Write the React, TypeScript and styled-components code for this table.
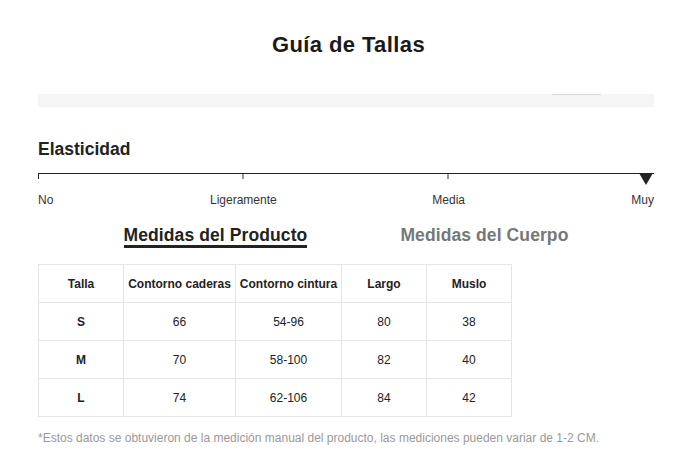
import React from "react";
import styled, { createGlobalStyle } from "styled-components";

const Global = createGlobalStyle`
  html, body { margin: 0; padding: 0; background: #fff; }
  body { font-family: "Liberation Sans", Arial, sans-serif; color: #222; }
`;

const Page = styled.div`
  width: 616px;
  padding: 33px 34px 0 38px;
  display: flex;
  flex-direction: column;
`;

const Title = styled.h1`
  margin: 0;
  font-size: 22px;
  line-height: 24px;
  font-weight: 700;
  letter-spacing: 0.4px;
  text-align: center;
  color: #1a1a1a;
  padding-left: 5px;
`;

const GreyBar = styled.div`
  margin-top: 37px;
  height: 13px;
  background: #f5f5f5;
  position: relative;
`;

const BarThumb = styled.div`
  position: absolute;
  top: 0;
  left: 514px;
  width: 49px;
  height: 1px;
  background: #dcdcdc;
`;

const SectionTitle = styled.h2`
  margin: 32px 0 0;
  font-size: 17.5px;
  line-height: 20px;
  font-weight: 700;
  color: #222;
`;

const Scale = styled.div`
  margin-top: 14px;
  position: relative;
  height: 12px;
  border-top: 1px solid #222;
  display: flex;
  justify-content: space-between;
`;

const Tick = styled.span<{ $dark?: boolean; $hide?: boolean }>`
  width: ${(p) => (p.$dark ? 1 : 2)}px;
  height: 5px;
  background: ${(p) => (p.$dark ? "#222" : "#999")};
  visibility: ${(p) => (p.$hide ? "hidden" : "visible")};
`;

const Marker = styled.span`
  position: absolute;
  top: -1px;
  right: 1px;
  width: 0;
  height: 0;
  border-left: 7px solid transparent;
  border-right: 7px solid transparent;
  border-top: 12px solid #222;
`;

const LabelRow = styled.div`
  margin-top: 7px;
  display: flex;
  justify-content: space-between;
`;

const Label = styled.span<{ $align: "start" | "center" | "end" }>`
  width: 0;
  display: flex;
  white-space: nowrap;
  justify-content: ${(p) =>
    p.$align === "start" ? "flex-start" : p.$align === "end" ? "flex-end" : "center"};
  font-size: 12px;
  line-height: 14px;
  color: #333;
`;

const Tabs = styled.div`
  margin-top: 18px;
  display: flex;
  justify-content: center;
  gap: 93px;
`;

const Tab = styled.div<{ $active?: boolean }>`
  font-size: 17.5px;
  line-height: 20px;
  font-weight: 700;
  letter-spacing: 0.1px;
  color: ${(p) => (p.$active ? "#222" : "#777")};
  border-bottom: 3px solid ${(p) => (p.$active ? "#222" : "transparent")};
`;

const Table = styled.table`
  margin-top: 16px;
  border-collapse: collapse;
  table-layout: fixed;
  width: 473px;
`;

const Cell = styled.td<{ $head?: boolean }>`
  border: 1px solid #e5e5e5;
  height: 37px;
  padding: 0;
  text-align: center;
  vertical-align: middle;
  font-size: 12px;
  line-height: 14px;
  white-space: nowrap;
  color: #222;
  font-weight: ${(p) => (p.$head ? 700 : 400)};
`;

const Note = styled.p`
  margin: 14px 0 0;
  font-size: 12px;
  line-height: 14px;
  color: #999;
`;

const widths = [85, 112, 106, 85, 85];
const headers = ["Talla", "Contorno caderas", "Contorno cintura", "Largo", "Muslo"];
const rows = [
  ["S", "66", "54-96", "80", "38"],
  ["M", "70", "58-100", "82", "40"],
  ["L", "74", "62-106", "84", "42"],
];

export default function App() {
  return (
    <>
      <Global />
      <Page>
        <Title>Guía de Tallas</Title>
        <GreyBar>
          <BarThumb />
        </GreyBar>
        <SectionTitle>Elasticidad</SectionTitle>
        <Scale>
          <Tick $dark />
          <Tick />
          <Tick />
          <Tick $hide />
          <Marker />
        </Scale>
        <LabelRow>
          <Label $align="start">No</Label>
          <Label $align="center">Ligeramente</Label>
          <Label $align="center">Media</Label>
          <Label $align="end">Muy</Label>
        </LabelRow>
        <Tabs>
          <Tab $active>Medidas del Producto</Tab>
          <Tab>Medidas del Cuerpo</Tab>
        </Tabs>
        <Table>
          <colgroup>
            {widths.map((w, i) => (
              <col key={i} style={{ width: w }} />
            ))}
          </colgroup>
          <tbody>
            <tr>
              {headers.map((h) => (
                <Cell as="th" $head key={h}>
                  {h}
                </Cell>
              ))}
            </tr>
            {rows.map((r) => (
              <tr key={r[0]}>
                {r.map((v, i) => (
                  <Cell $head={i === 0} key={i}>
                    {v}
                  </Cell>
                ))}
              </tr>
            ))}
          </tbody>
        </Table>
        <Note>
          *Estos datos se obtuvieron de la medición manual del producto, las mediciones pueden variar de 1-2 CM.
        </Note>
      </Page>
    </>
  );
}
